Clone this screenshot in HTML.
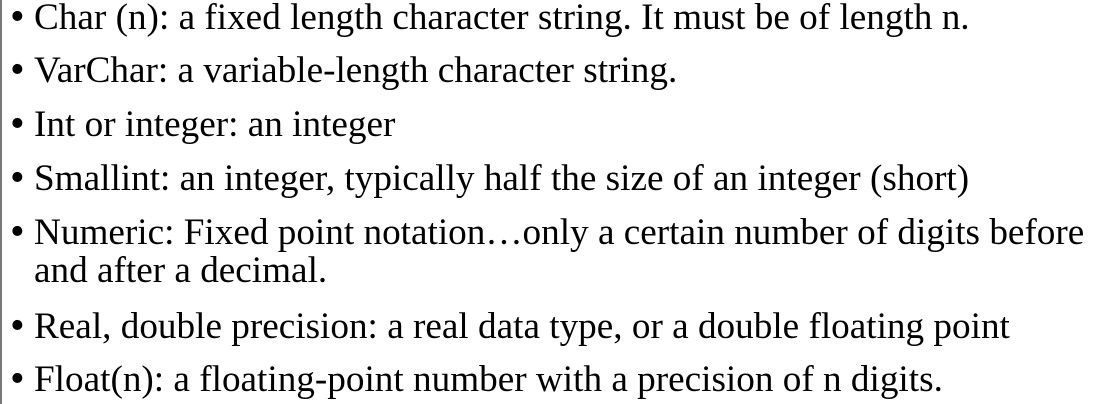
<!DOCTYPE html>
<html><head><meta charset="utf-8"><style>
html,body{margin:0;padding:0;background:#fff;width:1094px;height:404px;overflow:hidden}
body{position:relative;font-family:"Liberation Serif",serif;font-size:37.2px;line-height:37px;color:#000}
.b{position:absolute;left:0;top:0;width:2px;height:404px;background:#777}
.l{position:absolute;left:34px;white-space:nowrap}
.d{position:absolute;left:-24px;font-size:42px}
</style></head><body>
<div class="b"></div>
<div class="l" style="top:-1px"><span class="d">•</span>Char (n): a fixed length character string. It must be of length n.</div>
<div class="l" style="top:52px"><span class="d">•</span>VarChar: a variable-length character string.</div>
<div class="l" style="top:106px"><span class="d">•</span>Int or integer: an integer</div>
<div class="l" style="top:160px"><span class="d">•</span>Smallint: an integer, typically half the size of an integer (short)</div>
<div class="l" style="top:214px"><span class="d">•</span>Numeric: Fixed point notation…only a certain number of digits before</div>
<div class="l" style="top:252px">and after a decimal.</div>
<div class="l" style="top:308px"><span class="d">•</span>Real, double precision: a real data type, or a double floating point</div>
<div class="l" style="top:361px"><span class="d">•</span>Float(n): a floating-point number with a precision of n digits.</div>
</body></html>
